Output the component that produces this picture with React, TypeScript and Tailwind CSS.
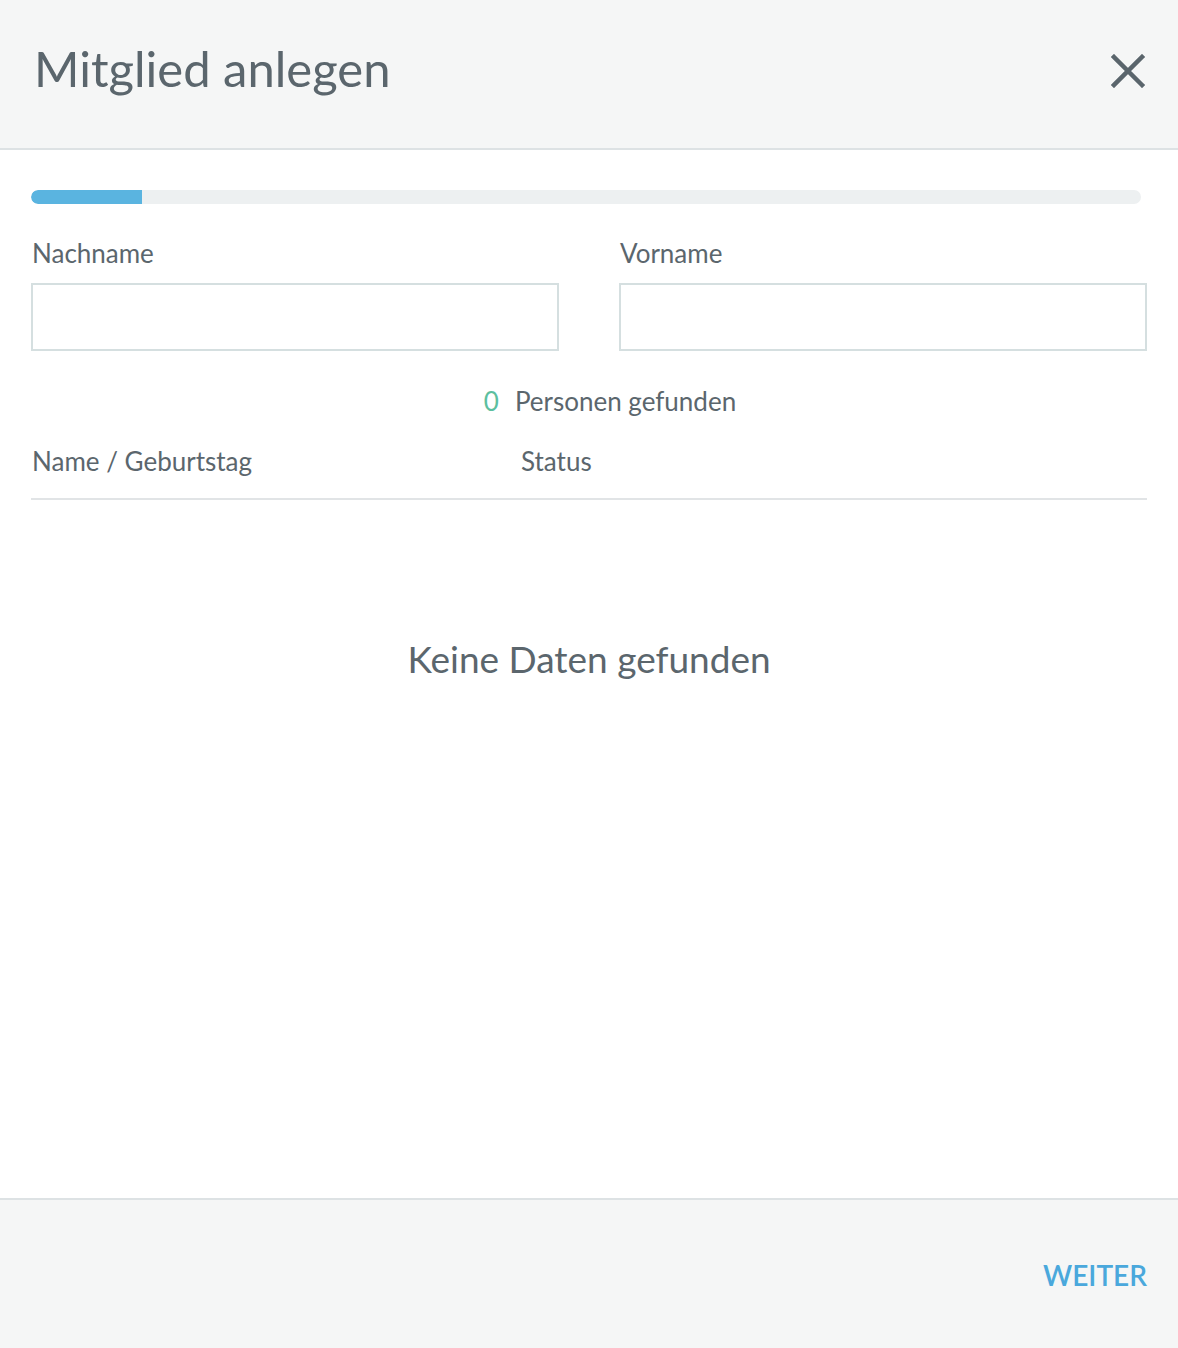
import React, { useState } from "react";

const CloseIcon = () => (
    <svg width="34" height="34" viewBox="0 0 34 34" fill="none">
        <path d="M3 3 L31 31 M31 3 L3 31" stroke="#5a656c" strokeWidth="4.5" strokeLinecap="square" />
    </svg>
);

const Field = (props: { label: string; value: string; onChange: (v: string) => void }) => (
    <label className="flex flex-col">
        <span className="text-[26px] leading-[34px] text-[#5b666d] pl-px">{props.label}</span>
        <input
            className="mt-[13px] h-[68px] w-full border-2 border-[#d5dfe0] bg-white px-4 text-[24px] text-[#5b666d] outline-none"
            value={props.value}
            onChange={(e) => props.onChange(e.target.value)}
        />
    </label>
);

const App = () => {
    const [lastName, setLastName] = useState("");
    const [firstName, setFirstName] = useState("");
    const found = 0;
    const step = 10;

    return (
        <div className="flex h-[1348px] w-full flex-col bg-white font-['Lato',sans-serif] text-[#5b666d]">
            {/* header */}
            <div className="flex h-[150px] shrink-0 items-center justify-between border-b-2 border-[#dde2e4] bg-[#f5f6f6] pl-[34px] pr-[33px]">
                <h1 className="text-[49px] leading-none pb-[11px]">Mitglied anlegen</h1>
                <button className="pb-[6px]">
                    <CloseIcon />
                </button>
            </div>

            {/* body */}
            <div className="flex flex-1 flex-col px-[31px] pt-[40px]">
                <div className="mr-[6px] h-[14px] overflow-hidden rounded-full bg-[#edf0f1]">
                    <div className="h-full rounded-l-full bg-[#5ab4e0]" style={{ width: `${step}%` }} />
                </div>

                <div className="mt-[32px] grid grid-cols-2 gap-x-[60px]">
                    <Field label="Nachname" value={lastName} onChange={setLastName} />
                    <Field label="Vorname" value={firstName} onChange={setFirstName} />
                </div>

                <div className="mt-[33px] flex justify-center pl-[42px] text-[26px] leading-[34px]">
                    <span className="mr-[16px] text-[#5dbf9f]">{found}</span>
                    <span>Personen gefunden</span>
                </div>

                <div className="mt-[26px] grid grid-cols-[490px_1fr] border-b-2 border-[#e1e4e6] pb-[20px] text-[26px] leading-[34px]">
                    <span className="pl-px">Name / Geburtstag</span>
                    <span>Status</span>
                </div>

                <div className="mt-[139px] text-center text-[37px] leading-[40px]">Keine Daten gefunden</div>
            </div>

            {/* footer */}
            <div className="flex h-[150px] shrink-0 items-center justify-end border-t-2 border-[#dde2e4] bg-[#f5f6f6] px-[31px]">
                <button className="pt-[2px] text-[28px] font-semibold text-[#4aa8dc]">WEITER</button>
            </div>
        </div>
    );
};

export default App;
